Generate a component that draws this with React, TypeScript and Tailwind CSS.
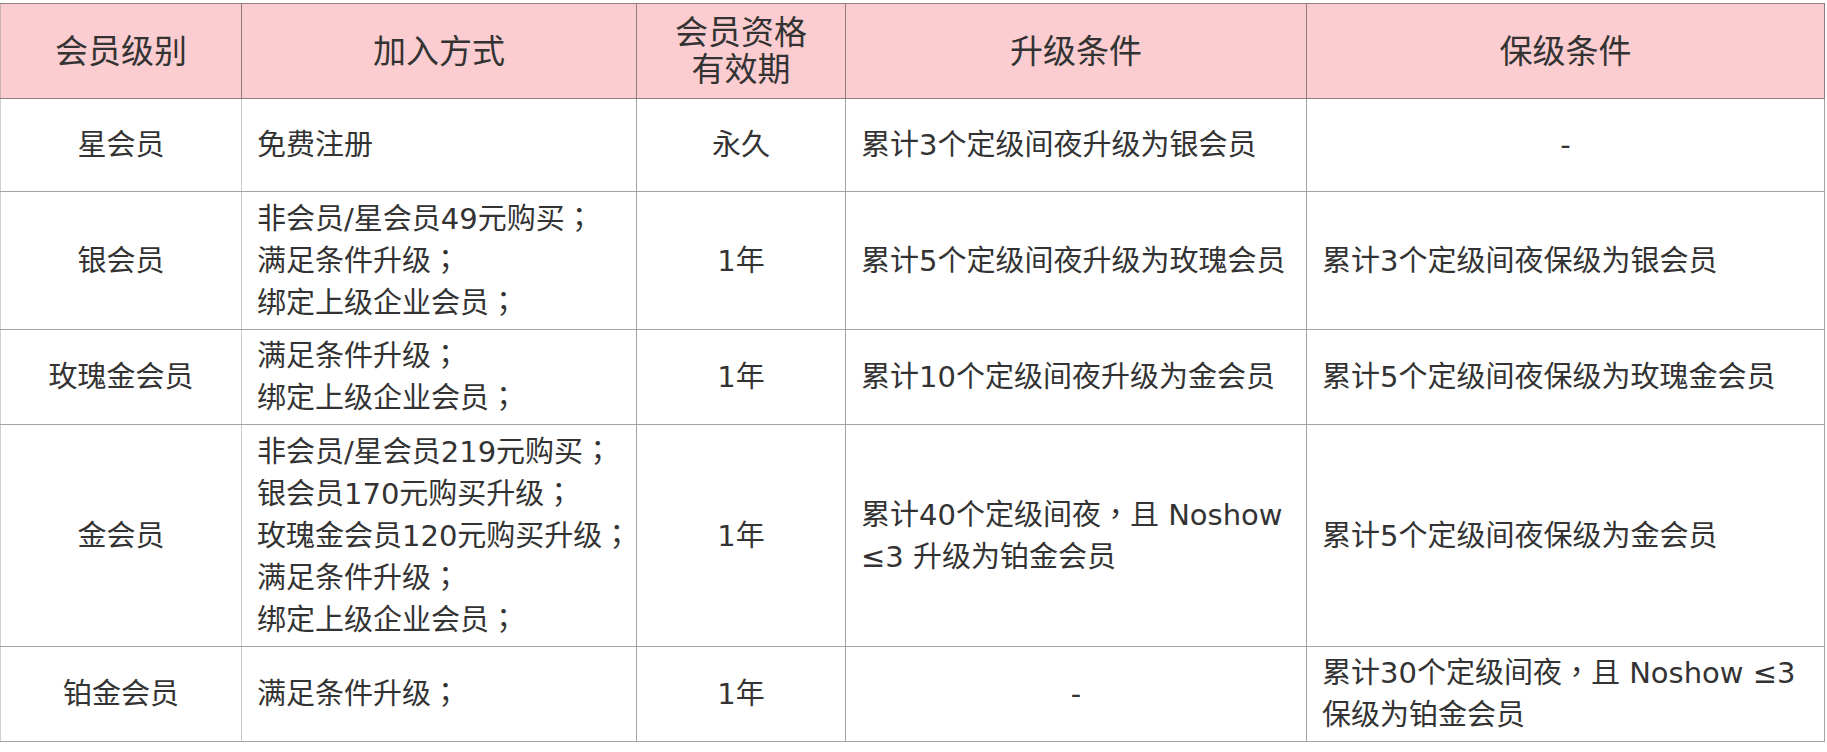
const font = '"DejaVu Sans", "Noto Sans CJK SC", sans-serif'

type Row = {
  level: string
  join: string[]
  term: string
  upgrade: string[]
  keep: string[]
  height: string
}

const rows: Row[] = [
  {
    level: "星会员",
    join: ["免费注册"],
    term: "永久",
    upgrade: ["累计3个定级间夜升级为银会员"],
    keep: [],
    height: "h-[93px]",
  },
  {
    level: "银会员",
    join: ["非会员/星会员49元购买；", "满足条件升级；", "绑定上级企业会员；"],
    term: "1年",
    upgrade: ["累计5个定级间夜升级为玫瑰会员"],
    keep: ["累计3个定级间夜保级为银会员"],
    height: "h-[138px]",
  },
  {
    level: "玫瑰金会员",
    join: ["满足条件升级；", "绑定上级企业会员；"],
    term: "1年",
    upgrade: ["累计10个定级间夜升级为金会员"],
    keep: ["累计5个定级间夜保级为玫瑰金会员"],
    height: "h-[95px]",
  },
  {
    level: "金会员",
    join: [
      "非会员/星会员219元购买；",
      "银会员170元购买升级；",
      "玫瑰金会员120元购买升级；",
      "满足条件升级；",
      "绑定上级企业会员；",
    ],
    term: "1年",
    upgrade: ["累计40个定级间夜，且 Noshow", "≤3 升级为铂金会员"],
    keep: ["累计5个定级间夜保级为金会员"],
    height: "h-[222px]",
  },
  {
    level: "铂金会员",
    join: ["满足条件升级；"],
    term: "1年",
    upgrade: [],
    keep: ["累计30个定级间夜，且 Noshow ≤3", "保级为铂金会员"],
    height: "h-[95px]",
  },
]

// Full-width punctuation sits centred in the reference, as in the TC font
function Text({ value }: { value: string }) {
  const parts = value.split(/([；，])/)
  return (
    <>
      {parts.map((p, i) =>
        p === "；" || p === "，" ? (
          <span key={i} className="font-['Noto_Sans_CJK_TC'] leading-none">
            {p}
          </span>
        ) : (
          <span key={i}>{p}</span>
        )
      )}
    </>
  )
}

// Multi-line cell, or a centred dash when empty
function Lines({ lines }: { lines: string[] }) {
  if (lines.length === 0) return <div className="text-center">-</div>
  return (
    <>
      {lines.map((l, i) => (
        <div key={i} className="whitespace-nowrap">
          <Text value={l} />
        </div>
      ))}
    </>
  )
}

export default function App() {
  const th = "border border-[#8f7d7f] font-normal text-[33px] leading-[37px] text-center align-middle"
  const td = "border border-[#a3a3a3] align-middle"

  return (
    <div className="bg-white w-[1827px] h-[752px] pt-[3px]" style={{ fontFamily: font }}>
      <table className="border-collapse table-fixed w-[1824px] text-[#333] text-[29px] leading-[42px]">
        <colgroup>
          <col className="w-[241px]" />
          <col className="w-[395px]" />
          <col className="w-[209px]" />
          <col className="w-[461px]" />
          <col className="w-[518px]" />
        </colgroup>
        <thead>
          <tr className="h-[95px] bg-[#fccdd0]">
            <th className={`${th} border-l-[#c9b3b5]`}>会员级别</th>
            <th className={th}>加入方式</th>
            <th className={th}>
              会员资格
              <br />
              有效期
            </th>
            <th className={th}>升级条件</th>
            <th className={th}>保级条件</th>
          </tr>
        </thead>
        <tbody>
          {rows.map((r) => (
            <tr key={r.level} className={r.height}>
              <td className={`${td} border-l-[#cfcfcf] border-r-[#c8c8c8] text-center`}>{r.level}</td>
              <td className={`${td} border-l-[#c8c8c8] px-[15px]`}>
                <Lines lines={r.join} />
              </td>
              <td className={`${td} text-center`}>{r.term}</td>
              <td className={`${td} px-[15px]`}>
                <Lines lines={r.upgrade} />
              </td>
              <td className={`${td} px-[15px]`}>
                <Lines lines={r.keep} />
              </td>
            </tr>
          ))}
        </tbody>
      </table>
    </div>
  )
}
